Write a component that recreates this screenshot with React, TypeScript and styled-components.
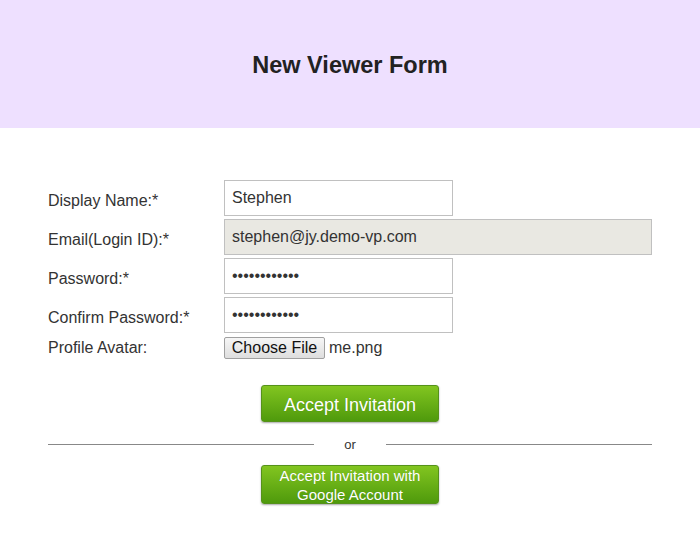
import React from "react";
import styled, { createGlobalStyle } from "styled-components";

const Global = createGlobalStyle`
  html, body { margin: 0; padding: 0; background: #fff; }
  body { font-family: "Liberation Sans", Arial, sans-serif; color: #333; }
  * { box-sizing: border-box; }
`;

const Page = styled.div`
  width: 700px;
  min-height: 541px;
  display: flex;
  flex-direction: column;
`;

const Header = styled.header`
  height: 128px;
  background: #eee0ff;
  display: flex;
  align-items: center;
  justify-content: center;
`;

const Title = styled.h1`
  margin: 0;
  font-size: 23.5px;
  font-weight: bold;
  color: #222;
  padding-top: 2px;
`;

const Form = styled.form`
  margin: 52px 48px 0 48px;
  display: flex;
  flex-direction: column;
`;

const Fields = styled.div`
  display: grid;
  grid-template-columns: 176px 1fr;
  row-gap: 3px;
`;

const Label = styled.label<{ $flush?: boolean }>`
  font-size: 16px;
  color: #333;
  display: flex;
  align-items: center;
  padding-top: ${(p) => (p.$flush ? "0" : "5px")};
`;

const Cell = styled.div`
  display: flex;
  align-items: center;
`;

const TextInput = styled.input<{ $wide?: boolean }>`
  width: ${(p) => (p.$wide ? "428px" : "229px")};
  height: 36px;
  border: 1px solid #c0c0c0;
  background: ${(p) => (p.$wide ? "#e9e8e2" : "#fff")};
  padding: 0 7px;
  font-family: "Liberation Sans", Arial, sans-serif;
  font-size: 16px;
  color: #333;
  outline: none;
  border-radius: 0;
`;

const FileRow = styled.div`
  display: flex;
  align-items: center;
  gap: 4px;
  height: 24px;
`;

const FileButton = styled.button`
  height: 22px;
  width: 101px;
  padding: 0;
  font-family: "Liberation Sans", Arial, sans-serif;
  font-size: 16px;
  color: #111;
  background: linear-gradient(#f6f6f6, #dedede);
  border: 1px solid #a0a0a0;
  border-radius: 2px;
`;

const FileName = styled.span`
  font-size: 16px;
  color: #333;
`;

const Actions = styled.div`
  display: flex;
  flex-direction: column;
  align-items: center;
  padding-top: 25px;
`;

const GreenButton = styled.button<{ $tall?: boolean }>`
  width: 178px;
  height: ${(p) => (p.$tall ? "39px" : "37px")};
  padding: ${(p) => (p.$tall ? "0 6px" : "2px 6px 0")};
  color: #fff;
  font-family: "Liberation Sans", Arial, sans-serif;
  font-size: ${(p) => (p.$tall ? "15px" : "18px")};
  line-height: ${(p) => (p.$tall ? "19px" : "20px")};
  background: linear-gradient(#82c520, #4f9a0c);
  border: 1px solid #55921a;
  border-radius: 3px;
  box-shadow: 0 1px 2px rgba(0, 0, 0, 0.35);
  text-shadow: 0 0 1px rgba(0, 0, 0, 0.15);
`;

const Divider = styled.div`
  width: 604px;
  display: flex;
  align-items: center;
  margin: 15px 0 13px;
`;

const Line = styled.div`
  flex: 1;
  height: 1px;
  background: #888;
`;

const Or = styled.span`
  width: 72px;
  text-align: center;
  font-size: 13px;
  color: #333;
`;

export default function App() {
  return (
    <Page>
      <Global />
      <Header>
        <Title>New Viewer Form</Title>
      </Header>
      <Form onSubmit={(e) => e.preventDefault()}>
        <Fields>
          <Label>Display Name:*</Label>
          <Cell>
            <TextInput defaultValue="Stephen" />
          </Cell>
          <Label>Email(Login ID):*</Label>
          <Cell>
            <TextInput $wide readOnly defaultValue="stephen@jy.demo-vp.com" />
          </Cell>
          <Label>Password:*</Label>
          <Cell>
            <TextInput type="password" defaultValue="abcdefghijkl" />
          </Cell>
          <Label>Confirm Password:*</Label>
          <Cell>
            <TextInput type="password" defaultValue="abcdefghijkl" />
          </Cell>
          <Label $flush>Profile Avatar:</Label>
          <FileRow>
            <FileButton type="button">Choose File</FileButton>
            <FileName>me.png</FileName>
          </FileRow>
        </Fields>
        <Actions>
          <GreenButton type="button">Accept Invitation</GreenButton>
          <Divider>
            <Line />
            <Or>or</Or>
            <Line />
          </Divider>
          <GreenButton type="button" $tall>
            Accept Invitation with Google Account
          </GreenButton>
        </Actions>
      </Form>
    </Page>
  );
}
